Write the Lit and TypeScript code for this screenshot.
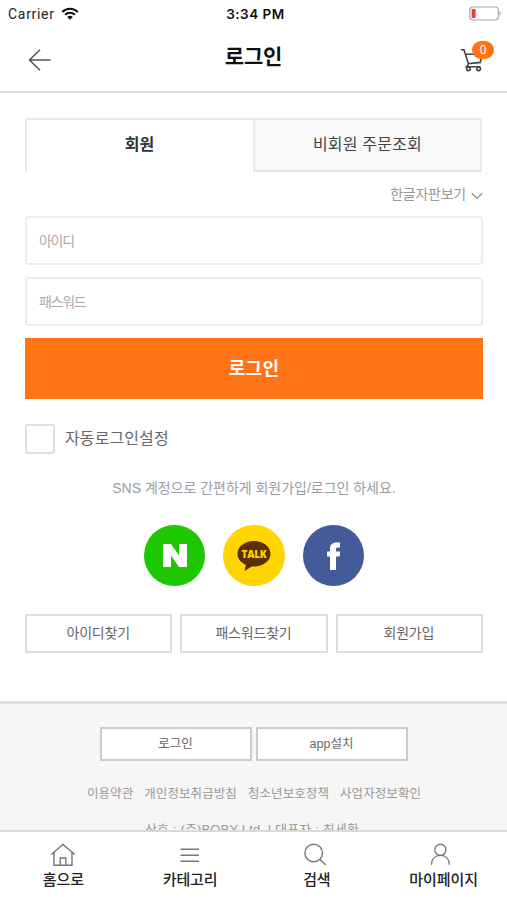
import { LitElement, html, css, svg } from "lit";
import { customElement } from "lit/decorators.js";

const navItems = [
  {
    label: "홈으로",
    icon: svg`<path d="M1.2 11.5 13 1.5l11.8 10M4 9v13.200h18V9M10.200 22.200v-7.200h5.600v7.200"/>`,
  },
  { label: "카테고리", icon: svg`<path d="M3.500 6.300h18.500M3.500 12.300h18.500M3.500 18.300h18.500"/>` },
  {
    label: "검색",
    icon: svg`<circle cx="9.700" cy="10" r="8.800"/><path d="m15.800 16.200 6 5.800"/>`,
  },
  {
    label: "마이페이지",
    icon: svg`<circle cx="9.400" cy="6.800" r="5.600"/><path d="M.5 21.800c0-5.600 3.400-9.400 8.900-9.400s8.900 3.800 8.900 9.400"/>`,
  },
];

@customElement("app-root")
export class AppRoot extends LitElement {
  static styles = css`
    :host {
      display: flex;
      flex-direction: column;
      height: 900px;
      overflow: hidden;
      background: #fff;
      font-family: "Liberation Sans", "Noto Sans CJK KR", sans-serif;
      color: #666;
    }
    * {
      box-sizing: border-box;
    }
    svg {
      display: block;
      fill: none;
    }
    .status {
      display: grid;
      grid-template-columns: 1fr auto 1fr;
      align-items: center;
      height: 28px;
      flex: none;
      padding: 0 6px 0 8px;
      color: #222;
      font: 14px/28px Roboto, sans-serif;
    }
    .carrier {
      display: flex;
      align-items: center;
      gap: 7px;
      letter-spacing: 0.7px;
    }
    .carrier svg {
      margin: -1px 0 0 -0.7px;
    }
    .time {
      font: 600 13.5px/28px Inter, sans-serif;
      color: #111;
      letter-spacing: 0.5px;
      padding-left: 2px;
    }
    .battery {
      justify-self: end;
      margin-top: -2px;
    }
    .header {
      display: grid;
      grid-template-columns: 1fr auto 1fr;
      align-items: center;
      height: 65px;
      flex: none;
      padding: 0 13px 5px 28px;
      border-bottom: 2px solid #dcdcdc;
    }
    .back {
      margin-top: 6px;
    }
    .title {
      margin: 0 15px 0 0;
      font-size: 21px;
      line-height: 30px;
      font-weight: 700;
      letter-spacing: -0.1px;
      color: #111;
    }
    .cart {
      position: relative;
      justify-self: end;
      width: 34px;
      height: 32px;
    }
    .cart svg {
      position: absolute;
      left: 0;
      top: 5px;
    }
    .badge {
      position: absolute;
      right: 0;
      top: 0;
      width: 22px;
      height: 18px;
      border-radius: 9px;
      background: #ff7417;
      color: #fff;
      text-align: center;
      font: 12px/18px Roboto, sans-serif;
    }
    .main {
      height: 608px;
      flex: none;
      padding: 25px 24px 0 25px;
    }
    .tabs {
      display: flex;
      height: 54px;
      font-size: 16px;
      line-height: 49px;
      text-align: center;
    }
    .tab {
      flex: 0 0 228px;
      border: solid #e9e9e9;
      border-width: 2px 0 0 2px;
      color: #333;
    }
    .tab.on {
      font-weight: 700;
      height: 53px;
      padding-right: 1px;
    }
    .tab.off {
      flex-basis: 229px;
      border-right-width: 2px;
      border-bottom: 2px solid #e5e5e5;
      background: #f8f8f8;
      color: #444;
      letter-spacing: 0.2px;
    }
    .keyboard {
      display: flex;
      justify-content: flex-end;
      align-items: center;
      height: 44px;
      gap: 5px;
      font-size: 14px;
      letter-spacing: -0.25px;
      color: #999;
    }
    .keyboard span {
      margin-top: -2px;
    }
    .keyboard svg {
      margin-top: 4px;
    }
    .field {
      display: block;
      width: 458px;
      height: 49px;
      margin-bottom: 12px;
      border: 2px solid #ececec;
      border-radius: 3px;
      padding: 0 12px;
      font-size: 14px;
      line-height: 46px;
      letter-spacing: -1.3px;
      color: #aaa;
    }
    .login {
      width: 458px;
      height: 61px;
      background: #ff7417;
      color: #fff;
      font-weight: 700;
      font-size: 18px;
      line-height: 62px;
      letter-spacing: 0.3px;
      text-align: center;
    }
    .auto {
      display: flex;
      align-items: center;
      gap: 10px;
      height: 30px;
      margin-top: 25px;
      font-size: 16px;
      letter-spacing: 0.1px;
      color: #666;
    }
    .box {
      width: 30px;
      height: 30px;
      border: 2px solid #e0e0e0;
      border-radius: 3px;
    }
    .auto span {
      margin-top: -4px;
    }
    .sns-text {
      margin-top: 24px;
      height: 20px;
      line-height: 20px;
      text-align: center;
      font-size: 14px;
      letter-spacing: -0.02px;
      color: #9a9da3;
    }
    .sns {
      display: flex;
      justify-content: center;
      gap: 18px;
      margin-top: 27px;
      height: 61px;
    }
    .circle {
      position: relative;
      width: 61.5px;
      height: 61px;
      border-radius: 50%;
      display: grid;
      place-items: center;
    }
    .naver {
      background: #1ec800;
    }
    .kakao {
      background: #ffd400;
    }
    .facebook {
      background: #435c99;
    }
    .talk {
      position: absolute;
      inset: 0;
      text-align: center;
      font: 800 10px/59px "Open Sans", sans-serif;
      letter-spacing: -0.2px;
      color: #ffd400;
    }
    .links {
      display: grid;
      grid-template-columns: repeat(3, 1fr);
      gap: 8px;
      width: 458px;
      margin-top: 28px;
      text-align: center;
      font-size: 14px;
      line-height: 35px;
      letter-spacing: -0.2px;
    }
    .links span {
      height: 39px;
      border: 2px solid #dedede;
      padding-right: 1px;
    }
    .footer {
      height: 129px;
      flex: none;
      overflow: hidden;
      border-top: 3px solid #dfdfdf;
      background: #f6f6f6;
      text-align: center;
    }
    .actions {
      display: flex;
      justify-content: center;
      gap: 4px;
      margin-top: 23px;
      font-size: 12.5px;
      line-height: 30px;
    }
    .actions span {
      width: 152px;
      height: 34px;
      border: 2px solid #ccc;
      background: #fff;
    }
    .policies {
      display: flex;
      justify-content: center;
      align-items: center;
      height: 20px;
      margin: 21px 0 0 1px;
      font-size: 12.5px;
      letter-spacing: 0.08px;
      color: #999;
    }
    .policies span + span::before {
      content: "";
      display: inline-block;
      width: 1px;
      height: 9px;
      margin: 0 5px;
      background: #efefef;
    }
    .company {
      margin: 18px 0 0 -3px;
      height: 20px;
      font-size: 13px;
      line-height: 20px;
      letter-spacing: 0.15px;
      white-space: pre;
      color: #999;
    }
    .nav {
      display: grid;
      grid-template-columns: repeat(4, 1fr);
      height: 70px;
      flex: none;
      border-top: 2px solid #dadada;
      background: #fff;
    }
    .item {
      display: flex;
      flex-direction: column;
      align-items: center;
      padding-top: 11px;
      color: #222;
      font-size: 15px;
      line-height: 22px;
      font-weight: 500;
      letter-spacing: -0.1px;
    }
    .item svg {
      margin-bottom: 2px;
      stroke: #777;
      stroke-width: 1.4;
    }
  `;

  render() {
    return html`
      <div class="status">
        <div class="carrier">
          Carrier
          <svg width="18" height="13" viewBox="0 0 18 13">
            <g stroke="#111" stroke-width="2.1">
              <path d="M1.2 4.9C5.6.6 12.4.6 16.8 4.9" />
              <path d="M4.1 7.8c2.8-2.7 7-2.7 9.8 0" />
            </g>
            <path d="M6.2 9.9c1.6-1.5 4-1.5 5.6 0L9 12.7z" fill="#111" />
          </svg>
        </div>
        <div class="time">3:34 PM</div>
        <svg class="battery" width="32" height="15" viewBox="0 0 32 15">
          <rect x=".7" y="1" width="28.6" height="13" rx="3.4" stroke="#aaa" stroke-width="1.2" />
          <path d="M30.5 5.5c1.6.6 1.6 3.4 0 4z" fill="#999" />
          <rect x="2.6" y="3" width="4" height="9" rx="1" fill="#f33b30" />
        </svg>
      </div>
      <div class="header">
        <svg class="back" width="24" height="22" viewBox="0 0 24 22" stroke="#555" stroke-width="1.6">
          <path d="M12 .8 1.5 11 12 21.2M1.5 11h21" />
        </svg>
        <h1 class="title">로그인</h1>
        <div class="cart">
          <svg width="24" height="26" viewBox="0 0 24 26" stroke="#444" stroke-width="1.6">
            <path d="M.8 3.700H4l4.600 14.800M5.500 8.200H22l-1.700 8.200-12.500 1.300M8.600 18.500 6.500 20.700H20.500" />
            <circle cx="8.400" cy="22.800" r="1.800" />
            <circle cx="18.600" cy="22.800" r="1.800" />
          </svg>
          <span class="badge">0</span>
        </div>
      </div>
      <div class="main">
        <div class="tabs">
          <div class="tab on">회원</div>
          <div class="tab off">비회원 주문조회</div>
        </div>
        <div class="keyboard">
          <span>한글자판보기</span>
          <svg width="12" height="8" viewBox="0 0 12 8" stroke="#999" stroke-width="1.5">
            <path d="m.7 1.2 5.3 5 5.3-5" />
          </svg>
        </div>
        <div class="field">아이디</div>
        <div class="field">패스워드</div>
        <div class="login">로그인</div>
        <div class="auto"><i class="box"></i><span>자동로그인설정</span></div>
        <div class="sns-text">SNS 계정으로 간편하게 회원가입/로그인 하세요.</div>
        <div class="sns">
          <div class="circle naver">
            <svg width="24" height="23" viewBox="0 0 24 23">
              <path d="M0 0h8l8 11.5V0h8v23h-8L8 11.5V23H0z" fill="#fff" />
            </svg>
          </div>
          <div class="circle kakao">
            <svg width="34" height="32" viewBox="0 0 34 32">
              <path
                d="M17 1c9.200 0 16.500 5.500 16.500 12.800S26.200 26.500 17 26.500l-2.300-.1L7.600 31l1.300-6.200C3.800 22.700.5 18.700.5 13.800.5 6.500 7.800 1 17 1z"
                fill="#5a3000"
              />
            </svg>
            <span class="talk">TALK</span>
          </div>
          <div class="circle facebook">
            <svg width="14" height="28" viewBox="0 0 14 28">
              <path
                d="M3 28V14.500H0V9.500h3V7.200C3 2.700 5.300.5 9.500.5H13v5h-2.300C9.400 5.500 9 6.200 9 7.500v2h4.200l-.5 5H9V28z"
                fill="#fff"
              />
            </svg>
          </div>
        </div>
        <div class="links">
          <span>아이디찾기</span><span>패스워드찾기</span><span>회원가입</span>
        </div>
      </div>
      <div class="footer">
        <div class="actions"><span>로그인</span><span>app설치</span></div>
        <div class="policies">
          <span>이용약관</span><span>개인정보취급방침</span><span>청소년보호정책</span><span>사업자정보확인</span>
        </div>
        <div class="company">상호 : (주)BOBY Ltd. | 대표자 : 최세환</div>
      </div>
      <div class="nav">
        ${navItems.map(
          (n) => html`<div class="item">
            <svg width="26" height="24" viewBox="0 0 26 24">${n.icon}</svg>
            ${n.label}
          </div>`
        )}
      </div>
    `;
  }
}
